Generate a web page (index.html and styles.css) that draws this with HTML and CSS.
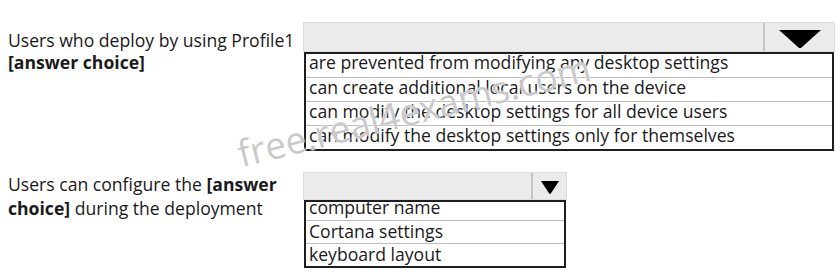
FILE: index.html
```html
<!DOCTYPE html>
<html>
<head>
<meta charset="utf-8">
<link rel="stylesheet" href="styles.css">
</head>
<body>
<div class="page">
  <div class="row row-one">
    <div class="label">Users who deploy by using Profile1<br><b>[answer choice]</b></div>
    <div class="dd dd-wide">
      <div class="dd-head">
        <div class="dd-field"></div>
        <div class="dd-btn"><svg width="42" height="18" viewBox="0 0 42 18"><path d="M0 0H42L22.5 17.5Q21 18.5 19.5 17.5Z" fill="#000"/></svg></div>
      </div>
      <ul class="dd-list">
        <li>are prevented from modifying any desktop settings</li>
        <li>can create additional local users on the device</li>
        <li>can modify the desktop settings for all device users</li>
        <li>can modify the desktop settings only for themselves</li>
      </ul>
    </div>
  </div>
  <div class="row row-two">
    <div class="label">Users can configure the <b>[answer choice]</b> during the deployment</div>
    <div class="dd dd-narrow">
      <div class="dd-head">
        <div class="dd-field"></div>
        <div class="dd-btn"><svg width="18" height="13" viewBox="0 0 18 13"><path d="M0 0H18L9.8 12.5Q9 13.3 8.2 12.5Z" fill="#000"/></svg></div>
      </div>
      <ul class="dd-list">
        <li class="clipped">computer name</li>
        <li>Cortana settings</li>
        <li>keyboard layout</li>
      </ul>
    </div>
  </div>
  <div class="watermark">free.real4exams.com</div>
</div>
</body>
</html>
```
FILE: styles.css
```css
html, body {
  margin: 0;
  padding: 0;
  background: #fff;
}
.page {
  position: relative;
  width: 840px;
  height: 277px;
  overflow: hidden;
  font-family: "Open Sans", "DejaVu Sans", sans-serif;
  font-size: 17.6px;
  color: #1a1a1a;
}
.row {
  display: flex;
  align-items: flex-start;
}
.row-one {
  padding-top: 22px;
}
.row-two {
  padding-top: 21px;
}
.label {
  box-sizing: border-box;
  width: 303px;
  padding-left: 8px;
  padding-top: 7px;
  line-height: 22px;
}
.row-two .label {
  padding-right: 20px;
  padding-top: 0;
  line-height: 24px;
}
.label b {
  font-weight: 700;
}
.dd-head {
  display: flex;
  background: #ebebeb;
  border: 1px solid #dcdcdc;
  box-sizing: border-box;
}
.dd-field {
  flex: 1;
  border-right: 2px solid #c4c4c4;
}
.dd-btn {
  display: flex;
  align-items: center;
  justify-content: center;
}
.dd-wide {
  width: 532px;
}
.dd-wide .dd-head {
  height: 30px;
}
.dd-wide .dd-btn {
  width: 69px;
  padding-top: 3px;
}
.dd-narrow {
  width: 264px;
}
.dd-narrow .dd-head {
  height: 28px;
}
.dd-narrow .dd-btn {
  width: 33px;
  padding-top: 2px;
}
.dd-list {
  list-style: none;
  margin: 0 0 0 1px;
  padding: 0;
  border: 2px solid #1e1e1e;
  box-sizing: border-box;
  background: #fff;
}
.dd-wide .dd-list {
  width: 530px;
}
.dd-narrow .dd-list {
  width: 262px;
}
.dd-list li {
  padding-left: 3px;
  border-top: 1px solid #bdbdbd;
  box-sizing: border-box;
  white-space: nowrap;
}
.dd-list li:first-child {
  border-top: 0;
}
.dd-wide .dd-list li {
  height: 24px;
  line-height: 18px;
}
.dd-wide .dd-list li:first-child {
  height: 23px;
  line-height: 17px;
}
.dd-narrow .dd-list li {
  height: 23px;
  line-height: 20px;
}
.dd-narrow .dd-list li.clipped {
  height: 18px;
  line-height: 10px;
  overflow: hidden;
}
.watermark {
  position: absolute;
  left: 238px;
  top: 128px;
  font-size: 37px;
  color: rgba(165, 165, 165, 0.6);
  transform: rotate(-14deg);
  transform-origin: 0 50%;
  white-space: nowrap;
  text-shadow: 0 0 2px #fff, 0 0 1px #fff;
}
```
